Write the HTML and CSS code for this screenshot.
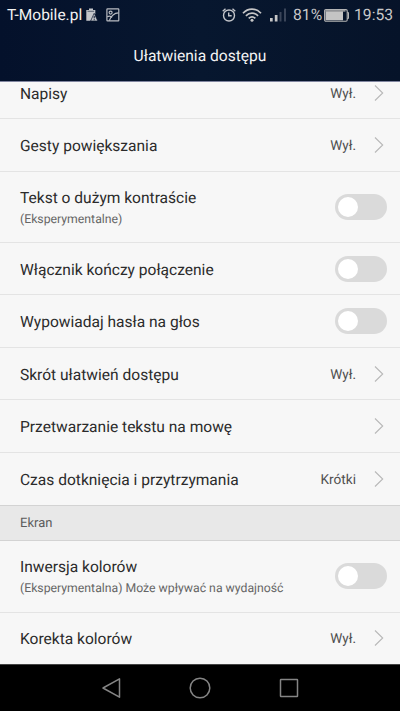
FILE: index.html
```html
<!DOCTYPE html>
<html lang="pl">
<head>
<meta charset="utf-8">
<title>Ułatwienia dostępu</title>
<link rel="stylesheet" href="styles.css">
</head>
<body>
<svg class="defs" width="0" height="0">
  <symbol id="chevron" viewBox="0 0 10 18"><path d="M1 1.500 8.700 9 1 16.500" fill="none" stroke="#b8b8b8" stroke-width="1.100"/></symbol>
</svg>
<header class="header">
  <div class="status">
    <span class="carrier">T-Mobile.pl</span>
    <svg class="battery-alert" width="12" height="14" viewBox="0 0 12 14">
      <path d="M3 0.500h4v1.400h2.300v4L5 12.800H.3V1.900H3z" fill="#c4c6ca"/>
      <path d="M1.500 3.300h6.600" stroke="#5c6474" stroke-width="1"/>
      <path d="M8.200 5.300 11.800 13H4.600z" fill="#c4c6ca" stroke="#07142d" stroke-width=".7"/>
      <path d="M8.200 8v2.400M8.200 11.200v1" stroke="#07142d" stroke-width="1"/>
    </svg>
    <svg class="picture" width="14" height="14" viewBox="0 0 14 14" fill="none" stroke="#b9bcc2" stroke-width="1.200">
      <rect x=".9" y=".9" width="11.900" height="11.900" rx=".6"/>
      <circle cx="4.600" cy="4.600" r="1.500"/>
      <path d="M1.200 8.800c2-1 3.800-.5 4.800.7M3.300 12.600C5 8 8 5 12.600 4.800"/>
    </svg>
    <span class="spacer"></span>
    <svg class="alarm" width="14" height="14" viewBox="0 0 14 14" fill="none" stroke="#c3c5ca">
      <circle cx="7" cy="7.500" r="5.500" stroke-width="1.400"/>
      <path d="M.7 3.200 3.500.8M13.300 3.200 10.500.8M6.700 4.600v3.200h3" stroke-width="1.400"/>
    </svg>
    <svg class="wifi" width="20" height="14" viewBox="0 0 20 14" fill="none" stroke="#c6c6c7" stroke-width="1.700">
      <path d="M1 5.200C6-.3 14-.3 19 5.200M3.900 7.900c3.500-3.600 8.700-3.600 12.200 0M6.700 10.400c2-1.900 4.600-1.900 6.600 0"/>
      <circle cx="10" cy="12.300" r="1.500" fill="#c6c6c7" stroke="none"/>
    </svg>
    <svg class="signal" width="17" height="14" viewBox="0 0 17 14">
      <path d="M0 10h2.700v3.500H0zM4.800 7h2.700v6.500H4.800z" fill="#c6c6c7"/>
      <path d="M9.500 4h2v9.500h-2zM14 .5h2v13h-2z" fill="#3a4559"/>
    </svg>
    <span class="percent">81%</span>
    <svg class="battery" width="26" height="13" viewBox="0 0 26 13">
      <rect x=".6" y=".6" width="22.600" height="11.600" rx="1.200" fill="none" stroke="#b4b4b4" stroke-width="1.100"/>
      <path d="M1.500 1.500h17.500v9.800H1.500z" fill="#c4c4c4"/>
      <path d="M1.500 1h20v1.700h-20z" fill="#929497"/>
      <path d="M23.300 3.500h1.200v6h-1.200" fill="none" stroke="#b4b4b4"/>
    </svg>
    <span class="clock">19:53</span>
  </div>
  <h1 class="title">Ułatwienia dostępu</h1>
</header>
<main class="list">
  <div class="row first"><span class="label">Napisy</span><span class="value">Wył.</span><svg class="chevron"><use href="#chevron"/></svg></div>
  <div class="row"><span class="label">Gesty powiększania</span><span class="value">Wył.</span><svg class="chevron"><use href="#chevron"/></svg></div>
  <div class="row double"><div class="text"><span class="label">Tekst o dużym kontraście</span><span class="note">(Eksperymentalne)</span></div><span class="switch"></span></div>
  <div class="row short"><span class="label">Włącznik kończy połączenie</span><span class="switch"></span></div>
  <div class="row"><span class="label">Wypowiadaj hasła na głos</span><span class="switch"></span></div>
  <div class="row short"><span class="label">Skrót ułatwień dostępu</span><span class="value">Wył.</span><svg class="chevron"><use href="#chevron"/></svg></div>
  <div class="row"><span class="label">Przetwarzanie tekstu na mowę</span><svg class="chevron"><use href="#chevron"/></svg></div>
  <div class="row before-section"><span class="label">Czas dotknięcia i przytrzymania</span><span class="value">Krótki</span><svg class="chevron"><use href="#chevron"/></svg></div>
  <h2 class="section">Ekran</h2>
  <div class="row double tall"><div class="text"><span class="label">Inwersja kolorów</span><span class="note">(Eksperymentalna) Może wpływać na wydajność</span></div><span class="switch"></span></div>
  <div class="row last"><span class="label">Korekta kolorów</span><span class="value">Wył.</span><svg class="chevron"><use href="#chevron"/></svg></div>
</main>
<nav class="nav">
  <svg width="22" height="22" viewBox="0 0 22 22"><path d="M3 11 19.500 1.800v18.400z"/></svg>
  <svg width="22" height="22" viewBox="0 0 22 22"><circle cx="11" cy="11" r="9.800"/></svg>
  <svg width="22" height="22" viewBox="0 0 22 22"><rect x="2.500" y="2.500" width="17" height="17" rx=".5"/></svg>
</nav>
</body>
</html>
```
FILE: styles.css
```css
* { box-sizing: border-box; }
body {
  margin: 0;
  width: 400px;
  height: 711px;
  overflow: hidden;
  display: flex;
  flex-direction: column;
  background: #f7f7f7;
  color: #2b2b2b;
  font-family: Roboto, sans-serif;
  text-rendering: geometricPrecision;
}
.defs { position: absolute; }
.header {
  height: 82px;
  flex: none;
  background: linear-gradient(90deg, #04112b, #07172f 50%, #061329);
  border-bottom: 1px solid #8186a0;
}
.status {
  display: flex;
  align-items: center;
  height: 30px;
  padding: 0 7px;
  color: #c8c8c9;
  font-size: 15.700px;
  line-height: 30px;
  white-space: nowrap;
}
.status svg { flex: none; }
.carrier { width: 75px; font-size: 15.500px; color: #f2f2f2; }
.battery-alert { margin-left: 4px; }
.picture { margin-left: 8px; }
.spacer { flex: 1; }
.alarm { margin-right: 1px; }
.wifi { margin-left: 5px; }
.signal { margin-left: 8px; }
.percent { width: 29px; margin-left: 6px; }
.battery { margin-left: 2px; }
.clock { width: 39px; margin-left: 4px; }
.title {
  margin: 0;
  height: 51px;
  font-size: 15.600px;
  font-weight: 400;
  line-height: 53px;
  text-align: center;
  color: #f3f3f4;
}
.list { height: 582px; flex: none; overflow: hidden; }
.row {
  display: flex;
  align-items: center;
  height: 53px;
  padding: 1px 13px 0 20px;
  border-bottom: 1px solid #e4e4e4;
}
.first { margin-top: -16px; padding-top: 2px; }
.short { height: 52px; padding-top: 2px; }
.double { height: 71px; padding-top: 0; }
.tall { height: 72px; }
.last { height: 51px; padding-top: 0; border-bottom: 0; }
.before-section { border-bottom-color: #d3d3d3; }
.text { flex: 1; }
.label { display: block; flex: 1; font-size: 15.550px; line-height: 20px; padding-top: 1px; white-space: nowrap; }
.text .label { padding-top: 0; }
.note { display: block; margin-top: 3px; font-size: 12.250px; line-height: 16px; color: #666; white-space: nowrap; }
.value { padding-top: 1px; font-size: 13.600px; color: #4f4f4f; }
.chevron { width: 10px; height: 18px; margin: 0 3px 1px 18px; }
.switch {
  width: 52px;
  height: 26px;
  padding: 3px;
  margin-bottom: 1px;
  border-radius: 13px;
  background: #dadada;
}
.switch::before {
  content: "";
  display: block;
  width: 20px;
  height: 20px;
  border-radius: 50%;
  background: #fff;
}
.section {
  margin: 0;
  height: 35px;
  padding-left: 20px;
  background: #e8e8e8;
  border-bottom: 1px solid #d3d3d3;
  font-size: 13px;
  font-weight: 400;
  line-height: 36px;
  color: #5c5c5c;
}
.nav {
  display: flex;
  justify-content: center;
  align-items: center;
  gap: 67px;
  height: 47px;
  background: #000;
  border-top: 1px solid #444;
}
.nav svg { fill: none; stroke: #858585; stroke-width: 1.500; stroke-linejoin: round; }
```
